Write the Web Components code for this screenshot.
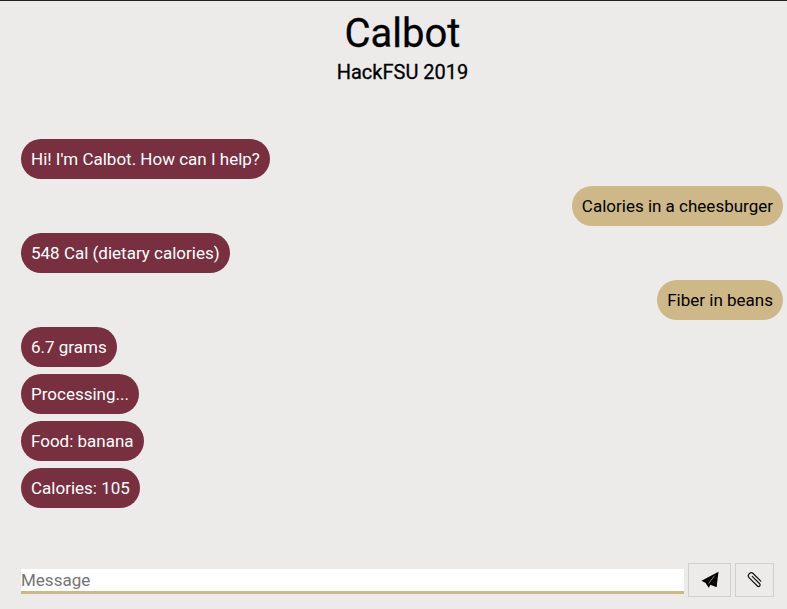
<!DOCTYPE html>
<html>
<head>
<meta charset="utf-8">
<title>Calbot</title>
<style>
    html, body { margin: 0; height: 100%; }
    body {
        background: #ecebe9;
        font-family: Roboto, "Liberation Sans", sans-serif;
        color: #000;
    }
</style>
</head>
<body>
<calbot-app>
    <chat-bubble>Hi! I'm Calbot. How can I help?</chat-bubble>
    <chat-bubble from="user">Calories in a cheesburger</chat-bubble>
    <chat-bubble>548 Cal (dietary calories)</chat-bubble>
    <chat-bubble from="user">Fiber in beans</chat-bubble>
    <chat-bubble>6.7 grams</chat-bubble>
    <chat-bubble>Processing...</chat-bubble>
    <chat-bubble>Food: banana</chat-bubble>
    <chat-bubble>Calories: 105</chat-bubble>
</calbot-app>
<script>
class CalbotApp extends HTMLElement {
    constructor() {
        super();
        this.attachShadow({ mode: 'open' });
        this.shadowRoot.innerHTML = `
        <style>
            :host{
                display:flex;
                flex-direction:column;
                height:609px;
                box-sizing:border-box;
                border-top:1px solid #222;
                overflow:hidden;
            }
            header{
                text-align:center;
                padding:9px 0 0 18px;
                -webkit-text-stroke:0.3px #000;
            }
            h1{
                margin:0;
                font-size:40px;
                font-weight:400;
                line-height:47px;
            }
            h2{
                margin:0;
                font-size:20px;
                font-weight:400;
                line-height:24px;
                padding-top:3px;
            }
            #messages{
                flex:1;
                display:flex;
                flex-direction:column;
                gap:7px;
                padding:55px 4px 0 21px;
            }
        </style>
        <header>
            <h1>Calbot</h1>
            <h2>HackFSU 2019</h2>
        </header>
        <section id="messages"><slot></slot></section>
        <chat-input></chat-input>
        `;
    }
}
class ChatBubble extends HTMLElement {
    constructor() {
        super();
        this.attachShadow({ mode: 'open' });
        this.shadowRoot.innerHTML = `
        <style>
            :host{
                display:block;
                align-self:flex-start;
                box-sizing:border-box;
                height:40px;
                padding:10px;
                border-radius:20px;
                background:#782f40;
                color:#fff;
                font-size:17px;
                line-height:20px;
                white-space:nowrap;
            }
            :host([from="user"]){
                align-self:flex-end;
                background:#ceb888;
                color:#000;
            }
        </style>
        <slot></slot>
        `;
    }
}
class ChatInput extends HTMLElement {
    constructor() {
        super();
        this.attachShadow({ mode: 'open' });
        this.shadowRoot.innerHTML = `
        <style>
            :host{
                display:flex;
                align-items:flex-end;
                gap:4px;
                padding:0 13px 12px 21px;
            }
            input{
                flex:1;
                min-width:0;
                box-sizing:border-box;
                height:25px;
                margin:0 0 3px;
                padding:0;
                border:0;
                border-bottom:3px solid #ceb888;
                border-radius:0;
                outline:0;
                background:#fff;
                font:17px/22px Roboto, "Liberation Sans", sans-serif;
            }
            input::placeholder{
                color:#757575;
            }
            button{
                display:flex;
                align-items:center;
                justify-content:center;
                box-sizing:border-box;
                height:34px;
                padding:0;
                border:1px solid #cfcfcd;
                border-radius:0;
                background:#ecebe9;
            }
            #send{ width:43px; }
            #attach{ width:39px; }
            svg{ display:block; }
        </style>
        <input type="text" placeholder="Message">
        <button id="send">
            <svg width="18" height="18" viewBox="0 0 18 18">
                <path d="M17.5 .8 .5 9.7 4.6 12 7.8 16.8 9.4 13.8 15.6 16.2z" fill="#000"/>
                <path d="M13.6 4.6 7.6 12.6" stroke="#ecebe9" stroke-width=".6" fill="none"/>
            </svg>
        </button>
        <button id="attach">
            <svg width="16" height="16" viewBox="0 0 16 16" fill="none" stroke="#111" stroke-width="1.2" stroke-linecap="round">
                <path transform="translate(8.2 7.7) rotate(45)" d="M5 -2.9H-5.5A2.9 2.9 0 0 0 -5.5 2.9H6A1.6 1.6 0 0 0 6 -.3H-4.5"/>
            </svg>
        </button>
        `;
    }
}
customElements.define('chat-bubble', ChatBubble);
customElements.define('chat-input', ChatInput);
customElements.define('calbot-app', CalbotApp);
</script>
</body>
</html>
